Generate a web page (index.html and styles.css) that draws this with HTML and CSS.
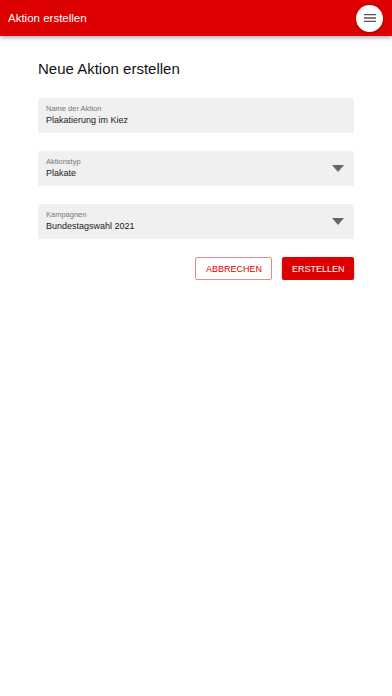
FILE: index.html
```html
<!DOCTYPE html>
<html lang="de">
<head>
    <meta charset="UTF-8">
    <meta name="viewport" content="width=device-width, initial-scale=1.0">
    <title>Aktion erstellen</title>
    <link rel="stylesheet" href="styles.css">
</head>
<body>
    <header class="app-bar">
        <span class="app-title">Aktion erstellen</span>
        <button class="menu-button" aria-label="Menü">
            <svg width="16" height="16" viewBox="0 0 24 24">
                <path d="M3 18h18v-2H3v2zm0-5h18v-2H3v2zm0-7v2h18V6H3z" fill="#555"/>
            </svg>
        </button>
    </header>

    <main class="content">
        <h1>Neue Aktion erstellen</h1>
        <form class="form">
            <div class="field">
                <div class="field-text">
                    <span class="field-label">Name der Aktion</span>
                    <span class="field-value">Plakatierung im Kiez</span>
                </div>
            </div>
            <div class="field">
                <div class="field-text">
                    <span class="field-label">Aktionstyp</span>
                    <span class="field-value">Plakate</span>
                </div>
                <svg class="arrow" width="12" height="7" viewBox="0 0 12 7"><path d="M0 0h12L6 7z" fill="#666"/></svg>
            </div>
            <div class="field">
                <div class="field-text">
                    <span class="field-label">Kampagnen</span>
                    <span class="field-value">Bundestagswahl 2021</span>
                </div>
                <svg class="arrow" width="12" height="7" viewBox="0 0 12 7"><path d="M0 0h12L6 7z" fill="#666"/></svg>
            </div>
            <div class="actions">
                <button type="button" class="btn btn-outline">ABBRECHEN</button>
                <button type="button" class="btn btn-filled">ERSTELLEN</button>
            </div>
        </form>
    </main>
</body>
</html>
```

FILE: styles.css
```css
body {
    font-family: 'Liberation Sans', Arial, sans-serif;
    background-color: #fff;
    margin: 0;
    color: #222;
}

.app-bar {
    height: 36px;
    background-color: #dd0000;
    display: flex;
    align-items: center;
    justify-content: space-between;
    padding: 0 9px 0 8px;
    box-shadow: 0 2px 4px rgba(0, 0, 0, 0.3);
}

.app-title {
    color: #fff;
    font-size: 11.5px;
}

.menu-button {
    width: 27px;
    height: 27px;
    border-radius: 50%;
    border: none;
    background-color: #fff;
    padding: 0;
    display: flex;
    align-items: center;
    justify-content: center;
    box-shadow: 0 1px 3px rgba(0, 0, 0, 0.3);
}

.content {
    padding: 0 38px;
}

h1 {
    font-size: 15px;
    line-height: 17px;
    font-weight: normal;
    color: #111;
    margin: 24px 0 21px;
}

.form {
    display: flex;
    flex-direction: column;
    gap: 18px;
}

.field {
    height: 35px;
    box-sizing: border-box;
    background-color: #f0f0f0;
    border-radius: 3px 3px 0 0;
    display: flex;
    align-items: center;
    justify-content: space-between;
    padding: 0 10px 0 8px;
}

.field-text {
    align-self: flex-start;
    display: flex;
    flex-direction: column;
    gap: 2.5px;
    padding-top: 5.5px;
}

.field-label {
    font-size: 7.5px;
    line-height: 9px;
    color: #777;
}

.field-value {
    font-size: 9px;
    line-height: 11px;
    color: #222;
}

.actions {
    display: flex;
    justify-content: flex-end;
    gap: 10px;
}

.btn {
    height: 23px;
    font-family: inherit;
    font-size: 9px;
    padding: 0 9.5px;
    border-radius: 2px;
    cursor: pointer;
}

.btn-outline {
    background-color: #fff;
    color: #dd0000;
    border: 1px solid #e88;
}

.btn-filled {
    background-color: #dd0000;
    color: #fff;
    border: none;
    box-shadow: 0 1px 3px rgba(0, 0, 0, 0.3);
}
```
